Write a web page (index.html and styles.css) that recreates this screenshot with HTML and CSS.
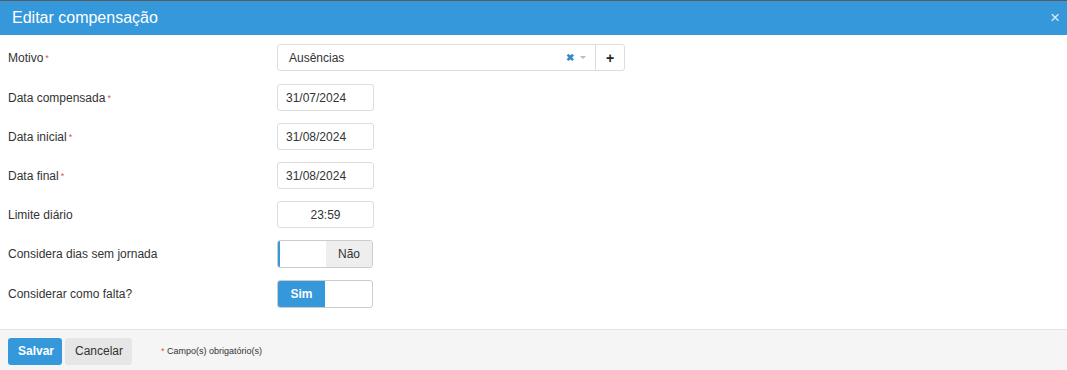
FILE: index.html
```html
<!DOCTYPE html>
<html lang="pt">
<head>
    <meta charset="UTF-8">
    <title>Editar compensação</title>
    <link rel="stylesheet" href="styles.css">
</head>
<body>
<div class="modal">
    <div class="modal-header">
        <h2 class="modal-title">Editar compensação</h2>
        <span class="close">&times;</span>
    </div>

    <div class="modal-body">
        <div class="form-row">
            <label>Motivo<span class="req">*</span></label>
            <div class="select-group">
                <div class="select">
                    <span class="select-text">Ausências</span>
                    <span class="select-clear">&#10006;</span>
                    <span class="select-arrow"></span>
                </div>
                <div class="select-add">+</div>
            </div>
        </div>
        <div class="form-row">
            <label>Data compensada<span class="req">*</span></label>
            <input type="text" class="field" value="31/07/2024">
        </div>
        <div class="form-row">
            <label>Data inicial<span class="req">*</span></label>
            <input type="text" class="field" value="31/08/2024">
        </div>
        <div class="form-row">
            <label>Data final<span class="req">*</span></label>
            <input type="text" class="field" value="31/08/2024">
        </div>
        <div class="form-row">
            <label>Limite diário</label>
            <input type="text" class="field center" value="23:59">
        </div>
        <div class="form-row">
            <label>Considera dias sem jornada</label>
            <div class="toggle off">
                <span class="toggle-on"></span>
                <span class="toggle-off">Não</span>
            </div>
        </div>
        <div class="form-row">
            <label>Considerar como falta?</label>
            <div class="toggle on">
                <span class="toggle-on">Sim</span>
                <span class="toggle-off"></span>
            </div>
        </div>
    </div>

    <div class="modal-footer">
        <button class="btn btn-primary">Salvar</button>
        <button class="btn btn-default">Cancelar</button>
        <span class="note"><span class="req">*</span> Campo(s) obrigatório(s)</span>
    </div>
</div>
</body>
</html>
```

FILE: styles.css
```css
/* Estilos base */
body {
    margin: 0;
    font-family: "Liberation Sans", Arial, sans-serif;
    font-size: 12px;
    color: #333;
    background-color: #fff;
}
.modal {
    border-top: 1px solid #5a5a5a;
}
.modal-header {
    display: flex;
    justify-content: space-between;
    align-items: center;
    height: 34px;
    padding: 0 7px 0 12px;
    background-color: #3498db;
    color: #fff;
}
.modal-title {
    margin: 0;
    font-size: 16px;
    font-weight: normal;
}
.close {
    font-size: 17px;
    line-height: 1;
    color: #d6e8f7;
    margin-top: -1px;
}
.modal-body {
    padding: 9px 8px 21px;
}
.form-row {
    display: grid;
    grid-template-columns: 269px auto;
    align-items: center;
    height: 27px;
    margin-bottom: 12px;
}
.form-row:first-child {
    margin-bottom: 13px;
}
.form-row:nth-child(6) {
    height: 28px;
}
.form-row:last-child {
    height: 28px;
    margin-bottom: 0;
}
.req {
    color: #d9534f;
    font-size: 9px;
    margin-left: 2px;
    vertical-align: 1px;
}
.field {
    box-sizing: border-box;
    width: 97px;
    height: 27px;
    padding: 0 8px;
    font-family: inherit;
    font-size: 12px;
    color: #333;
    border: 1px solid #ddd;
    border-radius: 3px;
}
.field.center {
    text-align: center;
}
.select-group {
    display: flex;
    width: 348px;
    height: 27px;
    box-sizing: border-box;
    border: 1px solid #ddd;
    border-radius: 3px;
}
.select {
    flex: 1;
    display: flex;
    align-items: center;
    padding: 0 0 0 11px;
    border-right: 1px solid #ddd;
}
.select-text {
    flex: 1;
}
.select-clear {
    color: #3a87c8;
    font-size: 10px;
    font-weight: bold;
    margin-right: 6px;
}
.select-arrow {
    width: 0;
    height: 0;
    border-left: 3px solid transparent;
    border-right: 3px solid transparent;
    border-top: 3px solid #bbb;
    margin-right: 9px;
}
.select-add {
    width: 28px;
    display: flex;
    align-items: center;
    justify-content: center;
    font-size: 14px;
    font-weight: bold;
    color: #222;
}
.toggle {
    display: flex;
    box-sizing: border-box;
    width: 96px;
    height: 28px;
    border: 1px solid #ccc;
    border-radius: 3px;
    overflow: hidden;
}
.toggle span {
    flex: 1;
    display: flex;
    align-items: center;
    justify-content: center;
}
.toggle.off .toggle-on {
    border-left: 2px solid #3498db;
}
.toggle.off .toggle-off {
    background-color: #eee;
    color: #333;
}
.toggle.on .toggle-on {
    background-color: #3498db;
    color: #fff;
    font-weight: bold;
}
.modal-footer {
    display: flex;
    align-items: center;
    height: 42px;
    padding: 0 8px;
    background-color: #f5f5f5;
    border-top: 1px solid #e3e3e3;
}
.btn {
    height: 27px;
    padding: 0 10px;
    border: none;
    border-radius: 3px;
    font-family: inherit;
    font-size: 12px;
    margin-right: 3px;
}
.btn-primary {
    background-color: #3498db;
    color: #fff;
    font-weight: bold;
    width: 54px;
}
.btn-default {
    background-color: #e6e6e6;
    color: #333;
    width: 67px;
}
.note {
    margin-left: 26px;
    font-size: 9px;
}
.note .req {
    font-size: 9px;
    vertical-align: 0;
    margin: 0;
}
```
